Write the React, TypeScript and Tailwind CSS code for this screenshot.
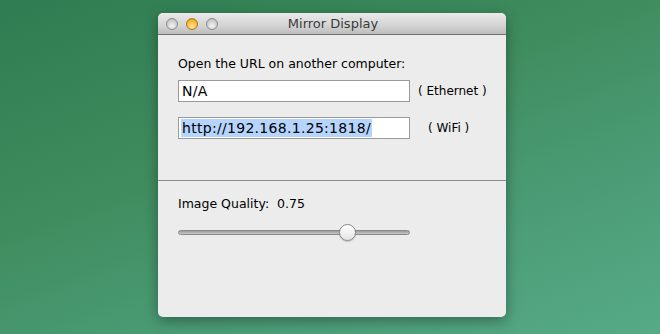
export default function App() {
  return (
    <div className="w-[660px] h-[334px] overflow-hidden bg-[linear-gradient(160deg,#2f7c52_0%,#3f8c5e_40%,#4b9c76_70%,#56aa86_100%)] font-['DejaVu_Sans',sans-serif] pt-[13px] pl-[158px]">
      <div className="w-[348px] h-[304px] flex flex-col rounded-[5px] bg-[#ececec] shadow-[0_4px_14px_rgba(0,0,0,0.35)] overflow-hidden">
        <div className="h-[22px] shrink-0 flex items-center relative bg-[linear-gradient(#eaeaea,#d3d3d3_60%,#bdbdbd)] border-b border-[#6e6e6e] rounded-t-[5px]">
          <div className="flex gap-[8px] pl-[8px]">
            <span className="w-[12px] h-[12px] rounded-full border border-[#8c8c8c] bg-[radial-gradient(circle_at_50%_70%,#f4f4f4,#c8c8c8_70%,#a9a9a9)]" />
            <span className="w-[12px] h-[12px] rounded-full border border-[#b0751a] bg-[radial-gradient(circle_at_50%_75%,#ffe9a0,#f7b42c_65%,#c9851c)]" />
            <span className="w-[12px] h-[12px] rounded-full border border-[#8c8c8c] bg-[radial-gradient(circle_at_50%_70%,#f4f4f4,#c8c8c8_70%,#a9a9a9)]" />
          </div>
          <span className="absolute inset-0 flex items-center justify-center text-[13px] text-[#3a3a3a] pl-[2px]">Mirror Display</span>
        </div>

        <div className="h-[146px] shrink-0 border-b border-[#8e8e8e] pl-[20px] pt-[21px]">
          <p className="text-[12.5px] text-black leading-[16px]">Open the URL on another computer:</p>
          <div className="flex items-center mt-[8px]">
            <div className="w-[232px] h-[22px] bg-white border border-[#9a9a9a] flex items-center pl-[3px] text-[14px] tracking-[0.3px] text-black">N/A</div>
            <span className="ml-[8px] text-[12px] text-black">( Ethernet )</span>
          </div>
          <div className="flex items-center mt-[15px]">
            <div className="w-[232px] h-[22px] bg-white border border-[#9a9a9a] flex items-center pl-[2px] text-[14px] tracking-[0.3px] text-black">
              <span className="bg-[#b5d5ff] px-[1px] leading-[18px]">http://192.168.1.25:1818/</span>
            </div>
            <span className="ml-[18px] text-[12px] text-black">( WiFi )</span>
          </div>
        </div>

        <div className="pl-[20px] pt-[15px]">
          <p className="text-[12.5px] text-black leading-[16px]">Image Quality:&nbsp;&nbsp;0.75</p>
          <div className="relative w-[232px] h-[16px] mt-[12px] flex items-center">
            <div className="w-full h-[5px] rounded-full bg-[linear-gradient(#9a9a9a,#c9c9c9)] border border-[#8a8a8a]" />
            <span className="absolute left-[161px] top-0 w-[17px] h-[17px] rounded-full border border-[#8a8a8a] bg-[linear-gradient(#ffffff,#e4e4e4)] shadow-[0_1px_1px_rgba(0,0,0,0.2)]" />
          </div>
        </div>
      </div>
    </div>
  )
}
